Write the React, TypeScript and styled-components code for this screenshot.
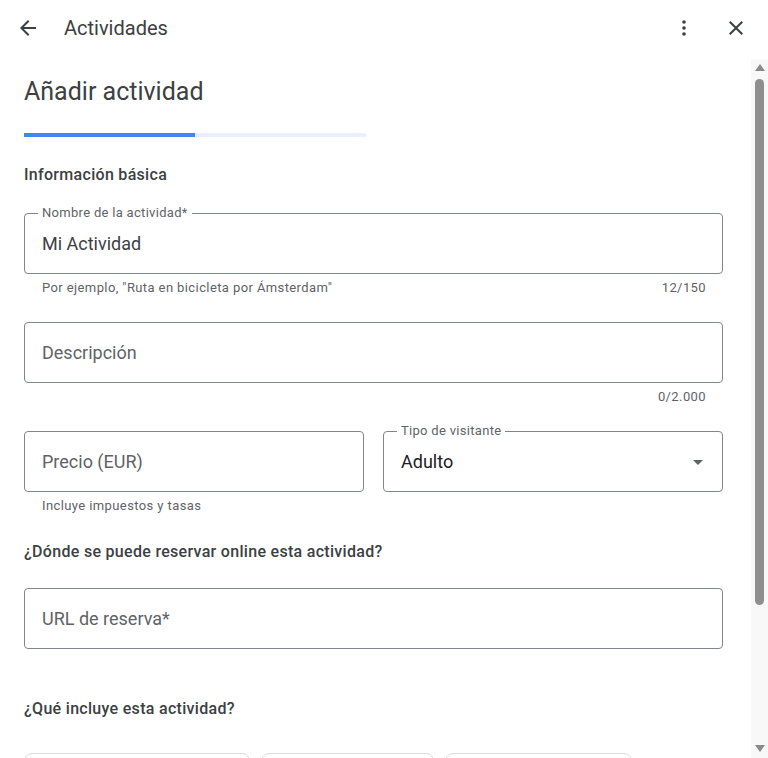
import styled, { createGlobalStyle } from 'styled-components';

const GlobalStyle = createGlobalStyle`
  html, body {
    margin: 0;
    padding: 0;
    background: #fff;
  }
  body {
    font-family: Roboto, "Noto Sans", Arial, sans-serif;
    color: #3c4043;
  }
  * {
    box-sizing: border-box;
  }
`;

const ArrowBackIcon = () => (
    <svg width="24" height="24" viewBox="0 0 24 24" fill="currentColor">
        <path d="M20 11H7.83l5.59-5.59L12 4l-8 8 8 8 1.41-1.41L7.83 13H20v-2z" />
    </svg>
);

const MoreVertIcon = () => (
    <svg width="24" height="24" viewBox="0 0 24 24" fill="currentColor">
        <circle cx="12" cy="6" r="1.8" />
        <circle cx="12" cy="12" r="1.8" />
        <circle cx="12" cy="18" r="1.8" />
    </svg>
);

const CloseIcon = () => (
    <svg width="24" height="24" viewBox="0 0 24 24" fill="currentColor">
        <path d="M19 6.41L17.59 5 12 10.59 6.41 5 5 6.41 10.59 12 5 17.59 6.41 19 12 13.41 17.59 19 19 17.59 13.41 12z" />
    </svg>
);

const DropIcon = () => (
    <svg width="24" height="24" viewBox="0 0 24 24" fill="currentColor">
        <path d="M7 10l5 5 5-5z" />
    </svg>
);

// only the top edge of these is in view
const chips = [
    { label: 'Entradas incluidas', width: 226 },
    { label: 'Guía turístico', width: 173 },
    { label: 'Comida y bebida', width: 187 },
];

const App = () => {
    return (
        <>
            <GlobalStyle />
            <Page>
                <Header>
                    <IconButton aria-label="Atrás">
                        <ArrowBackIcon />
                    </IconButton>
                    <HeaderTitle>Actividades</HeaderTitle>
                    <HeaderActions>
                        <IconButton aria-label="Más opciones">
                            <MoreVertIcon />
                        </IconButton>
                        <IconButton aria-label="Cerrar">
                            <CloseIcon />
                        </IconButton>
                    </HeaderActions>
                </Header>
                <Body>
                    <Scroller>
                        <Title>Añadir actividad</Title>
                        <Progress>
                            <ProgressFill $pct={50} />
                        </Progress>

                        <SectionHeading $top={28}>Información básica</SectionHeading>

                        <FieldGroup $top={28}>
                            <Field>
                                <FloatLabel>Nombre de la actividad*</FloatLabel>
                                <Input defaultValue="Mi Actividad" />
                            </Field>
                            <Helper>
                                <span>Por ejemplo, "Ruta en bicicleta por Ámsterdam"</span>
                                <span>12/150</span>
                            </Helper>
                        </FieldGroup>

                        <FieldGroup $top={26}>
                            <Field>
                                <Input placeholder="Descripción" />
                            </Field>
                            <Helper>
                                <span />
                                <span>0/2.000</span>
                            </Helper>
                        </FieldGroup>

                        <FieldRow>
                            <FieldGroup $top={0}>
                                <Field>
                                    <Input placeholder="Precio (EUR)" />
                                </Field>
                                <Helper>
                                    <span>Incluye impuestos y tasas</span>
                                </Helper>
                            </FieldGroup>
                            <FieldGroup $top={0}>
                                <Field>
                                    <FloatLabel>Tipo de visitante</FloatLabel>
                                    <SelectValue>Adulto</SelectValue>
                                    <DropArrow>
                                        <DropIcon />
                                    </DropArrow>
                                </Field>
                            </FieldGroup>
                        </FieldRow>

                        <SectionHeading $top={28}>¿Dónde se puede reservar online esta actividad?</SectionHeading>

                        <FieldGroup $top={26}>
                            <Field>
                                <Input placeholder="URL de reserva*" />
                            </Field>
                            <Helper />
                        </FieldGroup>

                        <SectionHeading $top={28}>¿Qué incluye esta actividad?</SectionHeading>

                        <ChipRow>
                            {chips.map(c => (
                                <Chip key={c.label} $width={c.width} aria-label={c.label} />
                            ))}
                        </ChipRow>
                    </Scroller>
                    <ScrollTrack>
                        <ScrollUp />
                        <ScrollThumb />
                        <ScrollDown />
                    </ScrollTrack>
                </Body>
            </Page>
        </>
    );
};

export default App;

const Page = styled.div`
    width: 768px;
    height: 758px;
    display: flex;
    flex-direction: column;
    overflow: hidden;
    background: #fff;
`;

const Header = styled.header`
    flex: none;
    height: 59px;
    display: flex;
    align-items: center;
    padding: 0 12px 3px 8px;
`;

const IconButton = styled.button`
    width: 40px;
    height: 40px;
    padding: 0;
    border: none;
    background: none;
    display: flex;
    align-items: center;
    justify-content: center;
    color: #3c4043;
    border-radius: 50%;
    cursor: pointer;
`;

const HeaderTitle = styled.div`
    flex: 1;
    margin-left: 16px;
    font-size: 20px;
    line-height: 24px;
    color: #3c4043;
`;

const HeaderActions = styled.div`
    display: flex;
    gap: 12px;
`;

const Body = styled.div`
    flex: 1;
    min-height: 0;
    display: flex;
`;

const Scroller = styled.main`
    flex: 1;
    overflow: hidden;
    padding: 17px 28px 0 24px;
`;

const Title = styled.h1`
    margin: 0;
    font-size: 25px;
    line-height: 32px;
    font-weight: 400;
    color: #3c4043;
`;

const Progress = styled.div`
    margin-top: 25px;
    width: 342px;
    height: 4px;
    background: #e8f0fe;
`;

const ProgressFill = styled.div<{ $pct: number }>`
    width: ${p => p.$pct}%;
    height: 100%;
    background: #4285f4;
`;

const SectionHeading = styled.h2<{ $top: number }>`
    margin: ${p => p.$top}px 0 0;
    font-size: 16px;
    line-height: 20px;
    font-weight: 500;
    letter-spacing: 0.3px;
    color: #3c4043;
`;

const FieldGroup = styled.div<{ $top: number }>`
    margin-top: ${p => p.$top}px;
`;

const FieldRow = styled.div`
    margin-top: 26px;
    display: grid;
    grid-template-columns: 1fr 1fr;
    column-gap: 19px;
`;

const Field = styled.div`
    position: relative;
    height: 61px;
    border: 1px solid #80868b;
    border-radius: 4px;
    display: flex;
    align-items: center;
    padding: 0 12px 0 17px;
`;

const FloatLabel = styled.span`
    position: absolute;
    top: -9px;
    left: 13px;
    padding: 0 4px;
    background: #fff;
    font-size: 13px;
    line-height: 16px;
    letter-spacing: 0.3px;
    color: #5f6368;
`;

const Input = styled.input`
    flex: 1;
    min-width: 0;
    border: none;
    outline: none;
    padding: 0;
    background: transparent;
    font-family: Roboto, "Noto Sans", Arial, sans-serif;
    font-size: 18px;
    color: #3c4043;
    &::placeholder {
        color: #5f6368;
        opacity: 1;
    }
`;

const SelectValue = styled.span`
    flex: 1;
    font-size: 18px;
    color: #202124;
`;

const DropArrow = styled.span`
    display: flex;
    color: #5f6368;
`;

const Helper = styled.div`
    display: flex;
    justify-content: space-between;
    min-height: 22px;
    padding: 6px 17px 0 18px;
    font-size: 13px;
    line-height: 16px;
    letter-spacing: 0.4px;
    color: #5f6368;
`;

const ChipRow = styled.div`
    margin-top: 34px;
    display: flex;
    gap: 11px;
`;

const Chip = styled.div<{ $width: number }>`
    width: ${p => p.$width}px;
    height: 36px;
    border: 1px solid #dadce0;
    border-radius: 8px;
`;

const ScrollTrack = styled.div`
    flex: none;
    width: 17px;
    background: #f8f8f8;
    display: flex;
    flex-direction: column;
    align-items: center;
    padding: 5px 0 6px;
`;

const ScrollUp = styled.div`
    width: 0;
    height: 0;
    border-left: 5px solid transparent;
    border-right: 5px solid transparent;
    border-bottom: 7px solid #8a8a8a;
`;

const ScrollThumb = styled.div`
    margin-top: 8px;
    width: 9px;
    height: 526px;
    border-radius: 5px;
    background: #8e8e8e;
`;

const ScrollDown = styled.div`
    margin-top: auto;
    width: 0;
    height: 0;
    border-left: 5px solid transparent;
    border-right: 5px solid transparent;
    border-top: 7px solid #8a8a8a;
`;
